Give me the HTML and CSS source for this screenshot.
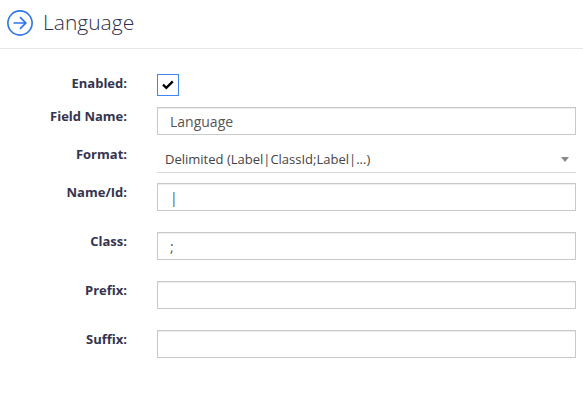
FILE: index.html
```html
<!DOCTYPE html>
<html lang="en">
<head>
<meta charset="utf-8">
<title>Language</title>
<link rel="stylesheet" href="styles.css">
</head>
<body>
<header class="header">
  <svg class="header-icon" width="26" height="26" viewBox="0 0 26 26" fill="none" stroke="#2f74ea">
    <circle cx="13" cy="13" r="12.1" stroke-width="1.6"/>
    <path d="M6.5 13H18.5M13 7.2L18.8 13L13 18.8" stroke-width="1.7"/>
  </svg>
  <h1 class="title">Language</h1>
</header>
<main class="form">
  <div class="row row-tight">
    <span class="label">Enabled:</span>
    <span class="checkbox"><svg width="12" height="10" viewBox="0 0 12 10" fill="none" stroke="#000" stroke-width="2.3"><path d="M1 4.7L4.3 7.8L10.8 1.4"/></svg></span>
  </div>
  <div class="row row-field">
    <span class="label">Field Name:</span>
    <div class="input">Language</div>
  </div>
  <div class="row row-select">
    <span class="label">Format:</span>
    <div class="select"><span class="select-text">Delimited (Label|ClassId;Label|...)</span><svg class="caret" width="8" height="5" viewBox="0 0 8 5"><path d="M0 0H8L4 5Z" fill="#888"/></svg></div>
  </div>
  <div class="row">
    <span class="label">Name/Id:</span>
    <div class="input">|</div>
  </div>
  <div class="row">
    <span class="label">Class:</span>
    <div class="input">;</div>
  </div>
  <div class="row">
    <span class="label">Prefix:</span>
    <div class="input"></div>
  </div>
  <div class="row">
    <span class="label">Suffix:</span>
    <div class="input"></div>
  </div>
</main>
</body>
</html>
```
FILE: styles.css
```css
* { box-sizing: border-box; }
body {
  margin: 0;
  background: #fff;
  font-family: "Open Sans", sans-serif;
  font-size: 13px;
  color: #444;
}
.header {
  display: flex;
  align-items: center;
  gap: 10px;
  height: 49px;
  padding: 0 7px 3px;
  border-bottom: 1px solid #e4e7ec;
}
.header-icon { flex: none; }
.title {
  margin: 0 0 2px;
  font-size: 21px;
  font-weight: 300;
  line-height: 30px;
  color: #2f2f4c;
}
.form { padding: 25px 7px 0 0; }
.row {
  display: grid;
  grid-template-columns: 127px 1fr;
  column-gap: 30px;
  align-items: start;
  height: 49px;
}
.row-tight { height: 33px; }
.row-field { height: 38px; }
.row-select { height: 38px; }
.label {
  text-align: right;
  font-weight: 700;
  line-height: 18px;
  color: #34344e;
}
.checkbox {
  display: flex;
  align-items: center;
  justify-content: center;
  width: 22px;
  height: 22px;
  border: 1px solid #3f87f5;
}
.input {
  height: 28px;
  padding: 0 12px;
  border: 1px solid #c9c9c9;
  box-shadow: inset 0 1px 1px rgba(0, 0, 0, 0.075);
  font-size: 14px;
  line-height: 28px;
  color: #555;
}
.select {
  display: flex;
  align-items: center;
  justify-content: space-between;
  height: 28px;
  padding: 0 7px 0 8px;
  border-bottom: 1px solid #d8dadc;
}
.caret { margin-top: 1px; }
```
